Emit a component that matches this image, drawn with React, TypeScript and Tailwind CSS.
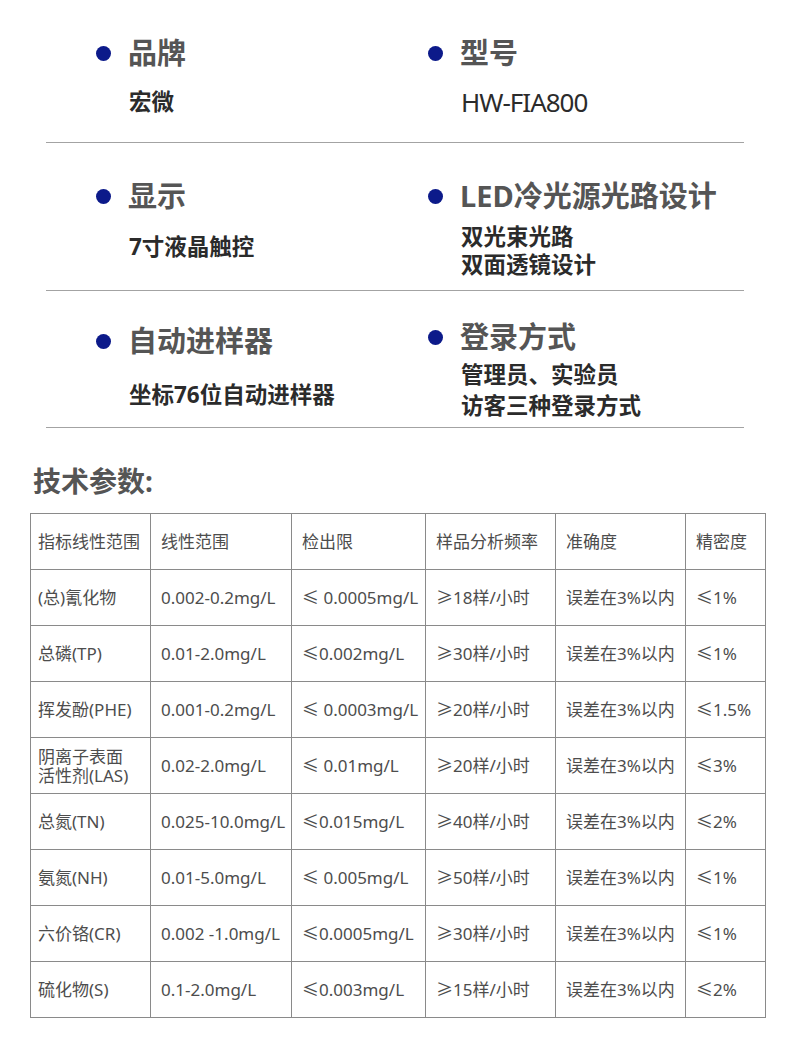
import type { ReactNode } from "react";

const FONT = { fontFamily: '"Noto Sans", "Noto Sans CJK SC", sans-serif' };

type Spec = {
  title: string;
  values: string[];
  titleTop: string;
  valueTop: string;
  valueLeading: string;
  latin?: boolean;
};

const rows: { left: Spec; right: Spec; pb: string }[] = [
  {
    left: { title: "品牌", values: ["宏微"], titleTop: "mt-[35px]", valueTop: "mt-[17px]", valueLeading: "leading-[28px]" },
    right: {
      title: "型号",
      values: ["HW-FIA800"],
      titleTop: "mt-[35px]",
      valueTop: "mt-[17px]",
      valueLeading: "leading-[28px]",
      latin: true,
    },
    pb: "pb-[26px]",
  },
  {
    left: { title: "显示", values: ["7寸液晶触控"], titleTop: "mt-[35px]", valueTop: "mt-[19px]", valueLeading: "leading-[28px]" },
    right: {
      title: "LED冷光源光路设计",
      values: ["双光束光路", "双面透镜设计"],
      titleTop: "mt-[35px]",
      valueTop: "mt-[9px]",
      valueLeading: "leading-[28px]",
    },
    pb: "pb-[11px]",
  },
  {
    left: { title: "自动进样器", values: ["坐标76位自动进样器"], titleTop: "mt-[32px]", valueTop: "mt-[22px]", valueLeading: "leading-[28px]" },
    right: {
      title: "登录方式",
      values: ["管理员、实验员", "访客三种登录方式"],
      titleTop: "mt-[28px]",
      valueTop: "mt-[4px]",
      valueLeading: "leading-[31px]",
    },
    pb: "pb-[6px]",
  },
];

const header = ["指标线性范围", "线性范围", "检出限", "样品分析频率", "准确度", "精密度"];

const data: ReactNode[][] = [
  ["(总)氰化物", "0.002-0.2mg/L", "≤ 0.0005mg/L", "≥18样/小时", "误差在3%以内", "≤1%"],
  ["总磷(TP)", "0.01-2.0mg/L", "≤0.002mg/L", "≥30样/小时", "误差在3%以内", "≤1%"],
  ["挥发酚(PHE)", "0.001-0.2mg/L", "≤ 0.0003mg/L", "≥20样/小时", "误差在3%以内", "≤1.5%"],
  [
    <span className="block leading-[19px]">
      阴离子表面
      <br />
      活性剂(LAS)
    </span>,
    "0.02-2.0mg/L",
    "≤ 0.01mg/L",
    "≥20样/小时",
    "误差在3%以内",
    "≤3%",
  ],
  ["总氮(TN)", "0.025-10.0mg/L", "≤0.015mg/L", "≥40样/小时", "误差在3%以内", "≤2%"],
  ["氨氮(NH)", "0.01-5.0mg/L", "≤ 0.005mg/L", "≥50样/小时", "误差在3%以内", "≤1%"],
  ["六价铬(CR)", "0.002 -1.0mg/L", "≤0.0005mg/L", "≥30样/小时", "误差在3%以内", "≤1%"],
  ["硫化物(S)", "0.1-2.0mg/L", "≤0.003mg/L", "≥15样/小时", "误差在3%以内", "≤2%"],
];

function SpecItem({ spec }: { spec: Spec }) {
  return (
    <div className="flex flex-col">
      <div className={`flex items-center gap-[17px] ${spec.titleTop}`}>
        <span className="h-[15px] w-[15px] shrink-0 rounded-full bg-[#0c1a8a]" />
        <span className="whitespace-nowrap text-[29px] font-bold leading-[36px] text-[#555555]">{spec.title}</span>
      </div>
      <div className={`pl-[33px] ${spec.valueTop}`}>
        {spec.values.map((value) =>
          spec.latin ? (
            <p key={value} className={`whitespace-nowrap text-[26px] tracking-[-1px] text-[#2b2b2b] ${spec.valueLeading}`}>
              {value}
            </p>
          ) : (
            <p key={value} className={`whitespace-nowrap text-[22.5px] font-bold text-[#2b2b2b] ${spec.valueLeading}`}>
              {value}
            </p>
          )
        )}
      </div>
    </div>
  );
}

function Cell({ children, first }: { children: ReactNode; first?: boolean }) {
  return (
    <div
      className={`flex h-[56px] items-center whitespace-nowrap border-b border-r border-[#8a8a8a] text-[17px] text-[#4d4d4d] ${
        first ? "pl-[7px]" : "pl-[10px]"
      }`}
    >
      {children}
    </div>
  );
}

export default function App() {
  return (
    <div className="min-h-[1062px] w-[790px] bg-white" style={FONT}>
      <div className="px-[46px]">
        {rows.map((row) => (
          <div
            key={row.left.title}
            className={`grid grid-cols-[332px_1fr] border-b border-[#a3a3a3] pl-[50px] ${row.pb}`}
          >
            <SpecItem spec={row.left} />
            <SpecItem spec={row.right} />
          </div>
        ))}
      </div>

      <h2 className="mt-[35px] pl-[33px] text-[28px] font-bold leading-[36px] text-[#555555]">技术参数:</h2>

      <div className="ml-[30px] mt-[14px] grid w-[736px] grid-cols-[120px_141px_134px_130px_130px_80px] border-l border-t border-[#8a8a8a]">
        {header.map((h, i) => (
          <Cell key={h} first={i === 0}>
            {h}
          </Cell>
        ))}
        {data.map((row, r) =>
          row.map((cell, i) => (
            <Cell key={`${r}-${i}`} first={i === 0}>
              {cell}
            </Cell>
          ))
        )}
      </div>
    </div>
  );
}
